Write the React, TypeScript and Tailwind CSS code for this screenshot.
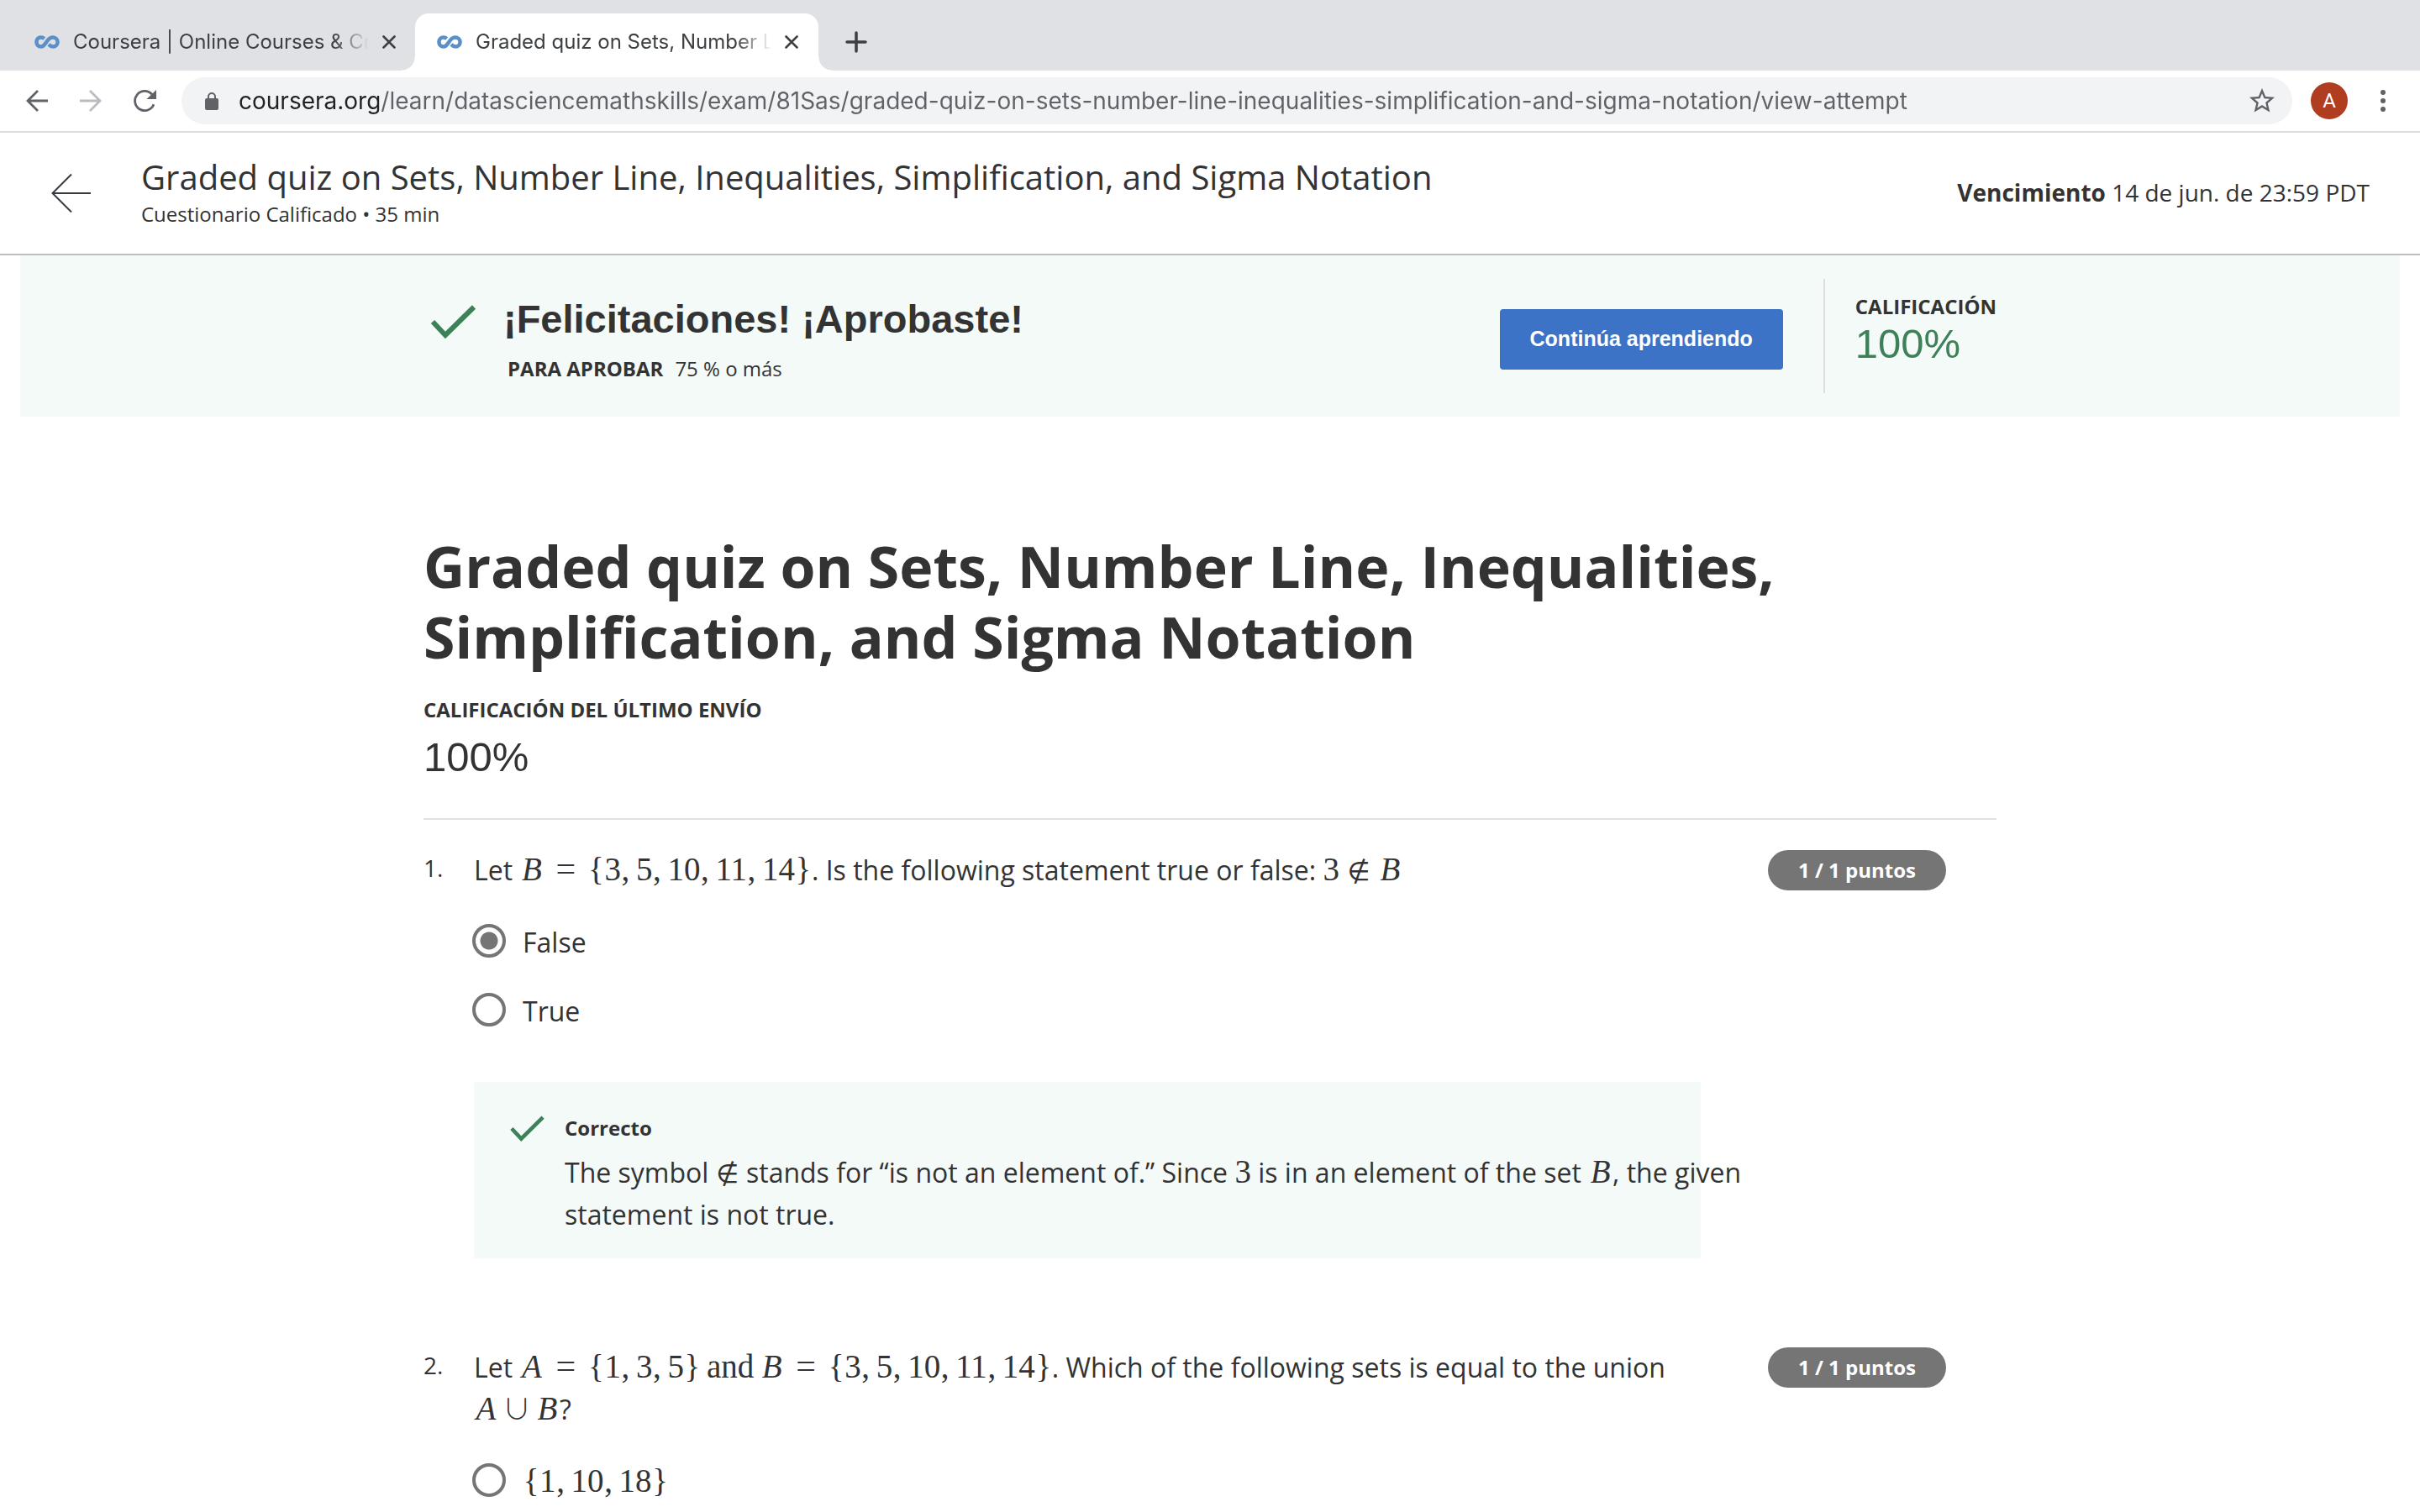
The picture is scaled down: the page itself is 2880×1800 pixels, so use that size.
import React from "react";

const OPEN = "font-['Open_Sans',sans-serif]";

function CourseraMark() {
  return (
    <svg viewBox="0 0 92 49" className="h-4 w-[30px] shrink-0" fill="none" stroke="#5a8fc8" strokeWidth="14" aria-hidden="true">
      <path d="M36 12.5C32 9 28 7.5 24 7.5C14 7.5 7.5 15 7.5 24.5S14 41.5 24 41.5C42 41.5 44 7.5 66 7.5C77 7.5 84.500 15 84.500 24.500S77 41.500 68 41.500C61 41.500 57 38 52 33" />
    </svg>
  );
}

function CloseIcon() {
  return (
    <svg viewBox="0 0 16 16" className="size-4" stroke="#3c4043" strokeWidth="2.6" strokeLinecap="round" aria-hidden="true">
      <path d="M1.500 1.500L14.500 14.500M14.500 1.500L1.500 14.500" />
    </svg>
  );
}

function Check({ className }: { className: string }) {
  return (
    <svg viewBox="0 0 54 40" className={className} fill="none" stroke="#3d8158" strokeWidth="6" aria-hidden="true">
      <path d="M2.500 20L17.500 36L51.500 2.500" />
    </svg>
  );
}

function TabItem({ title, active }: { title: string; active?: boolean }) {
  return (
    <div
      className={
        active
          ? "relative flex h-[68px] w-[480px] items-center rounded-t-2xl bg-white pl-[26px]"
          : "flex h-[68px] w-[494px] items-center pl-[41px]"
      }
    >
      {active && (
        <>
          <span className="absolute bottom-0 -left-4 size-4 bg-[radial-gradient(circle_at_0_0,transparent_15px,#fff_16px)]" />
          <span className="absolute bottom-0 -right-4 size-4 bg-[radial-gradient(circle_at_100%_0,transparent_15px,#fff_16px)]" />
        </>
      )}
      <CourseraMark />
      <button
        type="button"
        className="ml-4 w-[352px] overflow-hidden text-left text-2xl whitespace-nowrap text-[#3c4043] [mask-image:linear-gradient(to_right,#000_310px,transparent_352px)]"
      >
        {title}
      </button>
      <button type="button" aria-label="Cerrar pestaña" className="ml-4">
        <CloseIcon />
      </button>
    </div>
  );
}

function BrowserChrome() {
  return (
    <div className="font-[Inter,sans-serif]">
      <div className="flex h-[84px] items-end bg-[#dfe1e5]">
        <TabItem title="Coursera | Online Courses & Credentials" />
        <TabItem title="Graded quiz on Sets, Number Line" active />
        <button type="button" aria-label="Nueva pestaña" className="ml-8 mb-[21px]">
          <svg viewBox="0 0 26 26" className="size-[26px]" stroke="#3c4043" strokeWidth="3.500" strokeLinecap="round" aria-hidden="true">
            <path d="M13 2V24M2 13H24" />
          </svg>
        </button>
      </div>
      <div className="flex h-[74px] items-center border-b-2 border-[#dadce0] bg-white pl-[31px] pr-[41px]">
        <button type="button" aria-label="Atrás">
          <svg viewBox="0 0 26 26" className="size-[26px]" fill="none" stroke="#5f6368" strokeWidth="2.800" aria-hidden="true">
            <path d="M26 13H2M14 1L2 13L14 25" />
          </svg>
        </button>
        <button type="button" aria-label="Adelante" className="ml-[38px]">
          <svg viewBox="0 0 26 26" className="size-[26px]" fill="none" stroke="#bbbcbf" strokeWidth="2.800" aria-hidden="true">
            <path d="M0 13H24M12 1L24 13L12 25" />
          </svg>
        </button>
        <button type="button" aria-label="Volver a cargar" className="ml-[38px]">
          <svg viewBox="0 0 27 26" className="h-[26px] w-[27px]" aria-hidden="true">
            <path d="M22 5.500A11.600 11.600 0 1 0 24 17.300" fill="none" stroke="#5f6368" strokeWidth="2.800" />
            <path d="M27 0V11H15.500Z" fill="#5f6368" />
          </svg>
        </button>
        <div className="ml-[30px] flex h-14 flex-1 items-center rounded-full bg-[#f1f3f4] pl-7 pr-[18px]">
          <svg viewBox="0 0 16 21" className="h-[21px] w-4 shrink-0" aria-hidden="true">
            <rect x="0" y="7" width="16" height="14" rx="2" fill="#5f6368" />
            <path d="M4 8V5A4 4 0 0 1 12 5V8" fill="none" stroke="#5f6368" strokeWidth="2" />
          </svg>
          <input
            type="text"
            aria-label="Dirección"
            defaultValue="coursera.org/learn/datasciencemathskills/exam/81Sas/graded-quiz-on-sets-number-line-inequalities-simplification-and-sigma-notation/view-attempt"
            className="ml-6 min-w-0 flex-1 bg-[linear-gradient(to_right,#202124_167px,#5f6368_167px)] bg-clip-text text-[28px] leading-9 text-transparent outline-none"
          />
          <button type="button" aria-label="Agregar a favoritos">
            <svg viewBox="0 0 24 24" className="size-9" fill="#5f6368" aria-hidden="true">
              <path d="M22 9.240l-7.190-.62L12 2 9.190 8.630 2 9.240l5.460 4.730L5.820 21 12 17.270 18.180 21l-1.630-7.030L22 9.240zM12 15.400l-3.760 2.270 1-4.280-3.320-2.880 4.380-.38L12 6.100l1.710 4.040 4.380.38-3.320 2.880 1 4.280L12 15.400z" />
            </svg>
          </button>
        </div>
        <button type="button" className="ml-[22px] size-11 rounded-full bg-[#b03d20] font-[Roboto,sans-serif] text-2xl text-white">
          A
        </button>
        <button type="button" aria-label="Menú" className="ml-[39px]">
          <svg viewBox="0 0 6 26" className="h-[26px] w-[6px]" fill="#5f6368" aria-hidden="true">
            <circle cx="3" cy="3" r="3" />
            <circle cx="3" cy="13" r="3" />
            <circle cx="3" cy="23" r="3" />
          </svg>
        </button>
      </div>
    </div>
  );
}

function PageHeader() {
  return (
    <header className="flex h-[146px] items-center border-b-2 border-[#bdbdbd] pr-[60px] pl-[61px]">
      <a href="#volver" aria-label="Volver" className="w-[107px]">
        <svg viewBox="0 0 48 46" className="h-[46px] w-12" fill="none" stroke="#373a41" strokeWidth="2" aria-hidden="true">
          <path d="M47 23H1.500M24 .500L1.500 23L24 45.500" />
        </svg>
      </a>
      <div className="flex-1">
        <p className="text-[40px] leading-[54px]">
          Graded quiz on Sets, Number Line, Inequalities, Simplification, and Sigma Notation
        </p>
        <p className="mt-px pb-[5px] text-2xl">Cuestionario Calificado • 35 min</p>
      </div>
      <p className="pb-0.5 text-[28px] leading-10">
        <strong>Vencimiento</strong> 14 de jun. de 23:59 PDT
      </p>
    </header>
  );
}

function ResultBanner() {
  return (
    <section className="mx-6 bg-[#f3faf8]">
      <div className="mx-auto flex h-48 max-w-[1872px] items-start pl-2">
        <Check className="mt-[59px] h-10 w-[55px]" />
        <div className="ml-8 flex-1 pt-12">
          <h2 className="font-['Liberation_Sans',sans-serif] text-[47px] leading-[56px] font-bold">
            ¡Felicitaciones! ¡Aprobaste!
          </h2>
          <p className="mt-[15px] flex gap-[14px] pl-[5px] text-2xl">
            <strong className="font-bold">PARA APROBAR</strong> 75 % o más
          </p>
        </div>
        <button
          type="button"
          className="mt-16 h-[72px] rounded bg-[#3d73c7] px-9 font-['Liberation_Sans',sans-serif] text-[25px] font-bold text-white"
        >
          Continúa aprendiendo
        </button>
        <div className="mt-7 ml-12 h-[136px] border-l-2 border-[#dedede] pt-[17px] pl-9">
          <p className="text-2xl font-bold">CALIFICACIÓN</p>
          <p className="font-['Liberation_Sans',sans-serif] text-[49px] leading-[56px] text-[#3d8158]">100%</p>
        </div>
      </div>
    </section>
  );
}

const NOT_IN = "inline-block w-7 text-center font-['DejaVu_Sans',sans-serif] text-[31px] leading-[31px]";
const UNION = "mx-[5px] inline-block w-[34px] text-center font-['Noto_Sans_CJK_JP',sans-serif] text-[34px] leading-[34px] font-light";

/* Inline formula pieces: each token occupies the width it has in math type. */
function MathText({ src }: { src: string }) {
  const tokens = src.match(/\\[a-z]+|[A-Z]|\d|[{},=]/g) ?? [];
  return (
    <span className="inline-block font-['Liberation_Serif',serif] text-[39px] leading-[39px] whitespace-nowrap">
      {tokens.map((t, i) => {
        if (/^[A-Z]$/.test(t)) return <i key={i} className="inline-block w-[29px] text-center">{t}</i>;
        if (t === "=") return <span key={i} className="mx-[11px] inline-block w-[30px] text-center text-[42px] leading-[39px]">=</span>;
        if (t === ",") return <span key={i} className="mr-[7px] inline-block w-[11px] text-center">,</span>;
        if (t === "{" || t === "}") return <span key={i} className="inline-block w-5 text-center">{t}</span>;
        if (t === "\\notin") return <span key={i} className={"mx-[9px] " + NOT_IN}>∉</span>;
        if (t === "\\symbol") return <span key={i} className={NOT_IN}>∉</span>;
        if (t === "\\cup") return <span key={i} className={UNION}>∪</span>;
        if (t === "\\and") return <span key={i} className="mx-[7px]">and</span>;
        return <span key={i}>{t}</span>;
      })}
    </span>
  );
}

function Option({ name, checked, children }: { name: string; checked?: boolean; children: React.ReactNode }) {
  return (
    <label className="-ml-0.5 flex items-start gap-5">
      <input
        type="radio"
        name={name}
        defaultChecked={checked}
        className="mt-[3px] size-10 shrink-0 appearance-none rounded-full border-4 border-[#757575] bg-white checked:bg-[radial-gradient(circle,#757575_10px,transparent_11px)]"
      />
      <span className="text-[32px] leading-[50px]">{children}</span>
    </label>
  );
}

function Question({ n, prompt, children }: { n: number; prompt: React.ReactNode; children: React.ReactNode }) {
  return (
    <section className="flex items-start pr-[60px]">
      <div className="w-[60px] text-[28px] leading-[44px]">{n}.</div>
      <div className="flex-1">
        <div className="text-[32px] leading-[50px]">{prompt}</div>
        <div className="mt-9 flex flex-col gap-8">{children}</div>
      </div>
      <div className="mt-px ml-20 flex h-12 w-[212px] items-center justify-center rounded-full bg-[#757575] text-2xl font-bold text-white">
        1 / 1 puntos
      </div>
    </section>
  );
}

export default function App() {
  return (
    <div className={"min-h-screen overflow-hidden bg-white text-[#333] " + OPEN}>
      <BrowserChrome />
      <PageHeader />
      <ResultBanner />
      <main className="mx-auto max-w-[1872px] pt-[136px]">
        <h1 className="text-[68px] leading-[84px] font-bold">
          Graded quiz on Sets, Number Line, Inequalities, Simplification, and Sigma Notation
        </h1>
        <p className="mt-[29px] text-2xl font-bold">CALIFICACIÓN DEL ÚLTIMO ENVÍO</p>
        <p className="mt-3 font-['Liberation_Sans',sans-serif] text-[49px] leading-[56px]">100%</p>
        <hr className="mt-[45px] border-t-2 border-[#e1e1e1]" />
        <div className="mt-[35px] flex flex-col gap-[105px]">
          <Question
            n={1}
            prompt={
              <>
                Let <MathText src="B={3,5,10,11,14}" />. Is the following statement true or false: <MathText src="3\notin B" />
              </>
            }
          >
            <Option name="q1" checked>False</Option>
            <Option name="q1">True</Option>
            <div className="mt-[27px] flex items-start bg-[#f3faf8] pt-[39px] pb-[27px] pl-[43px]">
              <Check className="mt-px h-[31px] w-[41px] shrink-0" />
              <div className="-mr-[76px] ml-6 flex-1">
                <p className="text-2xl font-bold">Correcto</p>
                <p className="mt-3 text-[32px] leading-[50px]">
                  The symbol <MathText src="\symbol" /> stands for “is not an element of.” Since <MathText src="3" /> is in an element of the set{" "}
                  <MathText src="B" />, the given statement is not true.
                </p>
              </div>
            </div>
          </Question>
          <Question
            n={2}
            prompt={
              <>
                Let <MathText src="A={1,3,5}\and B={3,5,10,11,14}" />. Which of the following sets is equal to the union{" "}
                <MathText src="A\cup B" />?
              </>
            }
          >
            <Option name="q2">
              <MathText src="{1,10,18}" />
            </Option>
          </Question>
        </div>
      </main>
    </div>
  );
}
